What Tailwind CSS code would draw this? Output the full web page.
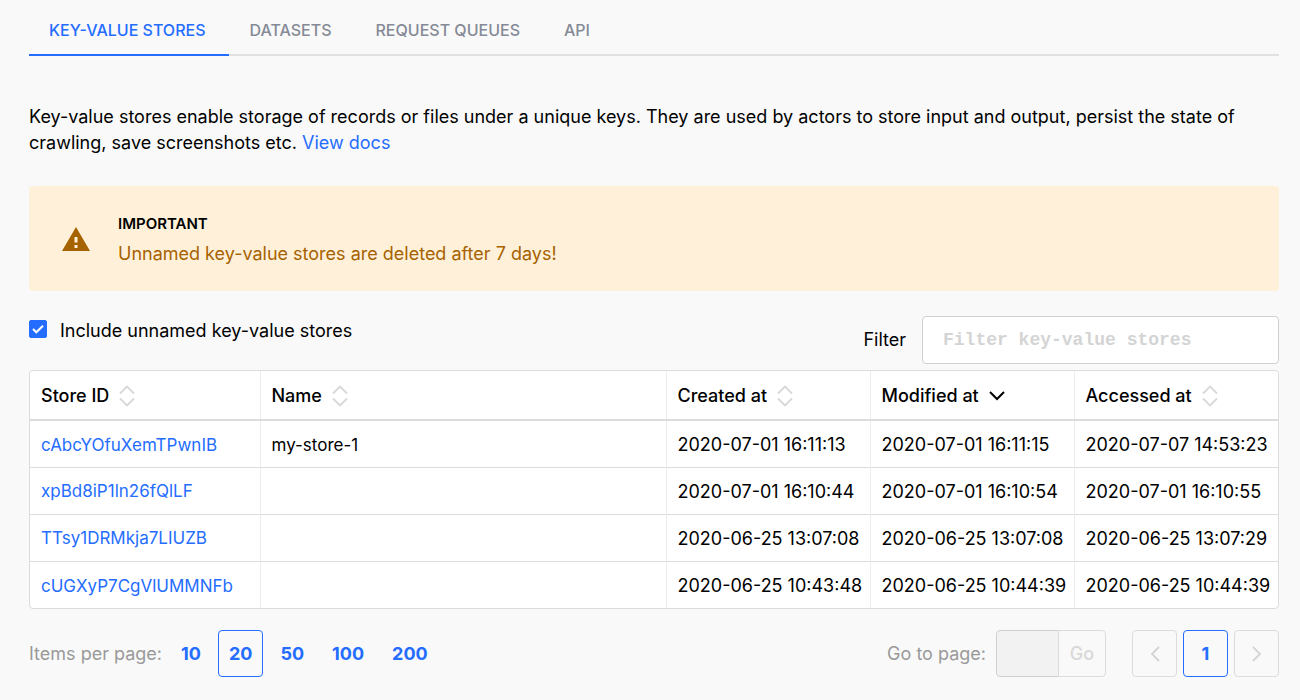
<!DOCTYPE html>
<html lang="en">
<head>
<meta charset="utf-8">
<meta name="viewport" content="width=device-width, initial-scale=1">
<title>Key-value stores</title>
<script src="https://cdn.jsdelivr.net/npm/@tailwindcss/browser@4"></script>
</head>
<body class="bg-[#f9f9f9] font-['Inter',sans-serif] text-lg text-black">
<svg class="hidden" aria-hidden="true">
  <symbol id="sort" viewBox="0 0 16 22"><path d="M1 8.500 8 1.500l7 7M1 13.500l7 7 7-7" fill="none" stroke="currentColor" stroke-width="1.800"/></symbol>
</svg>
<main class="pr-[21px] pl-[29px]">
  <nav class="flex h-14 border-b-2 border-[#dfe1e3] text-base font-medium text-[#858a96]">
    <a href="#kv" aria-current="page" class="-mb-0.5 border-b-2 border-[#246dff] pt-[18px] pr-6 pl-5 text-[#246dff]">KEY-VALUE STORES</a>
    <a href="#datasets" class="pt-[18px] pr-6 pl-5">DATASETS</a>
    <a href="#queues" class="pt-[18px] pr-6 pl-5">REQUEST QUEUES</a>
    <a href="#api" class="pt-[18px] pr-6 pl-5">API</a>
  </nav>

  <p class="mt-12 leading-[26px]">Key-value stores enable storage of records or files under a unique keys. They are used by actors to store input and output, persist the state of crawling, save screenshots etc. <a href="#docs" class="text-[#246dff]">View docs</a></p>

  <section class="mt-[30px] flex items-center rounded bg-[#fff1d9] pt-[23px] pb-[22px] pl-[33px]">
    <svg class="h-6 w-7" viewBox="0 0 28 24" aria-hidden="true"><path fill="#a76200" fill-rule="evenodd" d="M14 0 28 24H0zM12.500 10v5.500h3V10zm0 8v3h3v-3z"/></svg>
    <div class="ml-7">
      <h2 class="text-[15px] leading-[30px] font-semibold">IMPORTANT</h2>
      <p class="leading-[30px] text-[#a76200]">Unnamed key-value stores are deleted after 7 days!</p>
    </div>
  </section>

  <div class="mt-[25px] flex items-start justify-between">
    <label class="flex items-start gap-[13px] leading-[30px]">
      <span class="mt-1 grid">
        <input type="checkbox" checked class="col-start-1 row-start-1 size-[18px] appearance-none rounded-xs border border-[#246dff] checked:bg-[#246dff]">
        <svg class="pointer-events-none col-start-1 row-start-1 size-[18px]" viewBox="0 0 18 18" fill="none" stroke="#fff" stroke-width="2" aria-hidden="true"><path d="m4 9 3.300 3.300L14 5.700"/></svg>
      </span>
      Include unnamed key-value stores
    </label>
    <div class="flex items-center gap-4">
      <label for="filter">Filter</label>
      <input id="filter" type="text" placeholder="Filter key-value stores" class="h-12 w-[357px] rounded border border-[#cfcfcf] bg-white px-5 font-['Liberation_Mono',monospace] placeholder:font-bold placeholder:text-[#d4d4d4]">
    </div>
  </div>

  <div class="mt-1.5 overflow-hidden rounded border border-[#dcdcdc] bg-white">
    <table class="w-full table-fixed border-collapse text-left whitespace-nowrap [&_td]:px-[11px] [&_td]:pt-0.5 [&_th]:px-[11px] [&_th]:pt-0.5 [&_th]:font-medium [&_tr>*+*]:border-l [&_tr>*+*]:border-[#ececec]">
      <colgroup><col class="w-[230px]"><col><col class="w-[204px]"><col class="w-[204px]"><col class="w-[204px]"></colgroup>
      <thead>
        <tr class="h-[49px] border-b-2 border-[#dcdcdc]">
          <th><button class="flex items-center gap-2.5">Store ID <svg class="h-[22px] w-4 text-[#d8d8d8]"><use href="#sort"/></svg></button></th>
          <th><button class="flex items-center gap-2.5">Name <svg class="h-[22px] w-4 text-[#d8d8d8]"><use href="#sort"/></svg></button></th>
          <th><button class="flex items-center gap-2.5">Created at <svg class="h-[22px] w-4 text-[#d8d8d8]"><use href="#sort"/></svg></button></th>
          <th aria-sort="descending"><button class="flex items-center gap-2.5">Modified at <svg class="h-[22px] w-4" viewBox="0 0 16 22" fill="none" stroke="currentColor" stroke-width="2"><path d="m1 7 7 7 7-7"/></svg></button></th>
          <th><button class="flex items-center gap-2.5">Accessed at <svg class="h-[22px] w-4 text-[#d8d8d8]"><use href="#sort"/></svg></button></th>
        </tr>
      </thead>
      <tbody class="divide-y divide-[#dcdcdc]">
        <tr class="h-[47px]"><td class="text-[17px]"><a href="#s1" class="text-[#246dff]">cAbcYOfuXemTPwnIB</a></td><td class="text-[17px]">my-store-1</td><td>2020-07-01 16:11:13</td><td>2020-07-01 16:11:15</td><td>2020-07-07 14:53:23</td></tr>
        <tr class="h-[47px]"><td class="text-[17px]"><a href="#s2" class="text-[#246dff]">xpBd8iP1ln26fQlLF</a></td><td></td><td>2020-07-01 16:10:44</td><td>2020-07-01 16:10:54</td><td>2020-07-01 16:10:55</td></tr>
        <tr class="h-[47px]"><td class="text-[17px]"><a href="#s3" class="text-[#246dff]">TTsy1DRMkja7LIUZB</a></td><td></td><td>2020-06-25 13:07:08</td><td>2020-06-25 13:07:08</td><td>2020-06-25 13:07:29</td></tr>
        <tr class="h-[47px]"><td class="text-[17px]"><a href="#s4" class="text-[#246dff]">cUGXyP7CgVlUMMNFb</a></td><td></td><td>2020-06-25 10:43:48</td><td>2020-06-25 10:44:39</td><td>2020-06-25 10:44:39</td></tr>
      </tbody>
    </table>
  </div>

  <footer class="mt-[21px] flex items-center justify-between text-[#999]">
    <div class="flex items-center">
      <span class="mr-2">Items per page:</span>
      <div class="flex gap-1.5 font-bold text-[#246dff]">
        <button class="h-[47px] border border-transparent px-2.5">10</button>
        <button class="h-[47px] rounded border border-[#246dff] px-2.5" aria-pressed="true">20</button>
        <button class="h-[47px] border border-transparent px-2.5">50</button>
        <button class="h-[47px] border border-transparent px-2.5">100</button>
        <button class="h-[47px] border border-transparent px-2.5">200</button>
      </div>
    </div>
    <div class="flex items-center">
      <label for="page" class="mr-2.5">Go to page:</label>
      <input id="page" type="text" disabled class="h-[47px] w-[63px] rounded-l border border-[#d0d0d0] bg-[#f2f2f2]">
      <button disabled class="-ml-px h-[47px] w-12 rounded-r border border-[#dcdcdc] font-medium text-[#d8d8d8]">Go</button>
      <div class="ml-[26px] flex gap-1.5">
        <button disabled aria-label="Previous page" class="grid h-[47px] w-[45px] place-items-center rounded border border-[#dcdcdc] text-[#d4d4d4]"><svg class="h-4 w-2.5" viewBox="0 0 10 16" fill="none" stroke="currentColor" stroke-width="1.800"><path d="M9 1 2 8l7 7"/></svg></button>
        <button aria-current="page" class="h-[47px] w-[45px] rounded border border-[#246dff] font-bold text-[#246dff]">1</button>
        <button disabled aria-label="Next page" class="grid h-[47px] w-[45px] place-items-center rounded border border-[#dcdcdc] text-[#d4d4d4]"><svg class="h-4 w-2.5" viewBox="0 0 10 16" fill="none" stroke="currentColor" stroke-width="1.800"><path d="m1 1 7 7-7 7"/></svg></button>
      </div>
    </div>
  </footer>
</main>
</body>
</html>
